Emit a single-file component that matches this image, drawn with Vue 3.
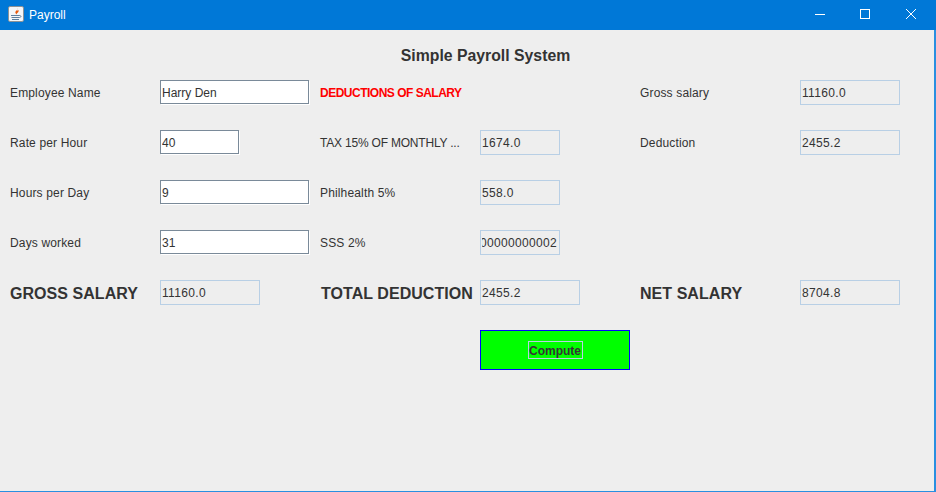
<template>
  <div class="window">
    <div class="titlebar">
      <div class="app-title">
        <svg class="java-icon" width="16" height="16" viewBox="0 0 16 16">
          <rect x="0.500" y="0.500" width="15" height="15" rx="1.500" fill="#f4f6f8" stroke="#8d9296" />
          <path d="M9.500 2c1 2-3 3-2 5 .3.6.6 1 1 1.500 0-1.500 3-2.500 2-4.500-.5 1-1.500 1-1.200 0 .1-.7.3-1.300.2-2z" fill="#e8590c" />
          <path d="M3 9.500h8M3.500 11.500h8M4 13.500h7" stroke="#5f7f9e" stroke-width="1" fill="none" />
          <path d="M11 9.500c2.500-.2 2.500 1.800.5 2" stroke="#5f7f9e" stroke-width="1" fill="none" />
        </svg>
        <span>Payroll</span>
      </div>
      <div class="win-buttons">
        <span class="win-btn">
          <svg width="12" height="12" viewBox="0 0 12 12"><path d="M2 6.500h10" stroke="#fff" fill="none" /></svg>
        </span>
        <span class="win-btn">
          <svg width="12" height="12" viewBox="0 0 12 12"><rect x="1.500" y="1.500" width="9" height="9" stroke="#fff" fill="none" /></svg>
        </span>
        <span class="win-btn">
          <svg width="12" height="12" viewBox="0 0 12 12"><path d="M1 1l10 10M11 1L1 11" stroke="#fff" fill="none" /></svg>
        </span>
      </div>
    </div>

    <div class="content">
      <h1 class="heading">Simple Payroll System</h1>
      <div class="form">
        <label>Employee Name</label>
        <input class="field wide" :value="name" />
        <label class="red">DEDUCTIONS OF SALARY</label>
        <span></span>
        <label>Gross salary</label>
        <div class="output long">{{ gross }}</div>

        <label>Rate per Hour</label>
        <input class="field narrow" :value="rate" />
        <label class="tax">TAX 15% OF MONTHLY ...</label>
        <div class="output">{{ tax }}</div>
        <label>Deduction</label>
        <div class="output long">{{ deduction }}</div>

        <label>Hours per Day</label>
        <input class="field wide" :value="hours" />
        <label>Philhealth 5%</label>
        <div class="output">{{ philhealth }}</div>
        <span></span>
        <span></span>

        <label>Days worked</label>
        <input class="field wide" :value="days" />
        <label>SSS 2%</label>
        <div class="output scrolled">
          <div class="clip"><span>{{ sss }}</span></div>
        </div>
        <span></span>
        <span></span>

        <label class="big">GROSS SALARY</label>
        <div class="output long">{{ gross }}</div>
        <label class="big total">TOTAL DEDUCTION</label>
        <div class="output long">{{ deduction }}</div>
        <label class="big">NET SALARY</label>
        <div class="output long">{{ net }}</div>

        <button class="compute"><span>Compute</span></button>
      </div>
    </div>
  </div>
</template>

<script setup>
const name = 'Harry Den'
const rate = '40'
const hours = '9'
const days = '31'

const gross = '11160.0'
const tax = '1674.0'
const philhealth = '558.0'
const sss = '223.20000000000002'
const deduction = '2455.2'
const net = '8704.8'
</script>

<style>
html,
body {
  margin: 0;
  background: #eeeeee;
}
</style>

<style scoped>
.window {
  width: 936px;
  height: 492px;
  display: flex;
  flex-direction: column;
  overflow: hidden;
  font-family: "Liberation Sans", Arial, sans-serif;
  font-size: 12px;
  color: #333333;
}

.titlebar {
  height: 30px;
  flex: none;
  background: #0078d7;
  display: flex;
  align-items: center;
  justify-content: space-between;
  color: #ffffff;
}

.app-title {
  display: flex;
  align-items: center;
  gap: 5px;
  padding-left: 8px;
}

.java-icon {
  display: block;
  margin-bottom: 2px;
}

.win-buttons {
  display: flex;
  padding-right: 2px;
}

.win-btn {
  width: 46px;
  height: 30px;
  box-sizing: border-box;
  padding-bottom: 2px;
  display: flex;
  align-items: center;
  justify-content: center;
}

.content {
  flex: 1;
  box-sizing: border-box;
  background: #eeeeee;
  border-right: 2px solid #2a8fe0;
  border-bottom: 1px solid #2a8fe0;
}

.heading {
  margin: 0;
  height: 50px;
  padding: 17px 0 0 37px;
  box-sizing: border-box;
  text-align: center;
  font-size: 15.8px;
  line-height: 18px;
  font-weight: bold;
  color: #333333;
}

.form {
  display: grid;
  grid-template-columns: 150px 160px 160px 160px 160px 100px;
  grid-auto-rows: 25px;
  row-gap: 25px;
  padding-left: 10px;
}

label {
  display: flex;
  align-items: center;
  white-space: nowrap;
  letter-spacing: 0.15px;
}

.red {
  color: #ff0000;
  font-weight: bold;
  letter-spacing: -0.5px;
}

.tax {
  letter-spacing: -0.2px;
}

.big {
  font-size: 16px;
  font-weight: bold;
  letter-spacing: 0.05px;
  padding-top: 2px;
  box-sizing: border-box;
}

.total {
  padding-left: 1px;
}

.field {
  height: 24px;
  box-sizing: border-box;
  margin: 0;
  padding: 2px 1px 0;
  font: inherit;
  color: #333333;
  background: #ffffff;
  border: 1px solid #7a8a99;
  border-radius: 0;
  outline: none;
  box-shadow: 1px 1px 0 #ffffff;
}

.wide {
  width: 149px;
}

.narrow {
  width: 79px;
}

.output {
  width: 80px;
  height: 25px;
  box-sizing: border-box;
  padding: 0 1px;
  display: flex;
  align-items: center;
  border: 1px solid #b8cfe5;
  letter-spacing: 0.33px;
  white-space: nowrap;
}

.long {
  width: 100px;
}

.scrolled {
  padding: 0 2px 0 1px;
}

.clip {
  flex: 1;
  min-width: 0;
  display: flex;
  justify-content: flex-end;
  overflow: hidden;
}

.clip span {
  flex: none;
}

.compute {
  grid-column: 4 / span 2;
  width: 150px;
  height: 40px;
  padding: 0;
  box-sizing: border-box;
  background: #00ff00;
  border: 1px solid #0000ff;
  font: inherit;
  font-weight: bold;
  color: #333333;
  display: flex;
  align-items: center;
  justify-content: center;
}

.compute span {
  border: 1px solid #b8cfe5;
  padding: 2px 0.5px 0;
  line-height: 14px;
}
</style>
